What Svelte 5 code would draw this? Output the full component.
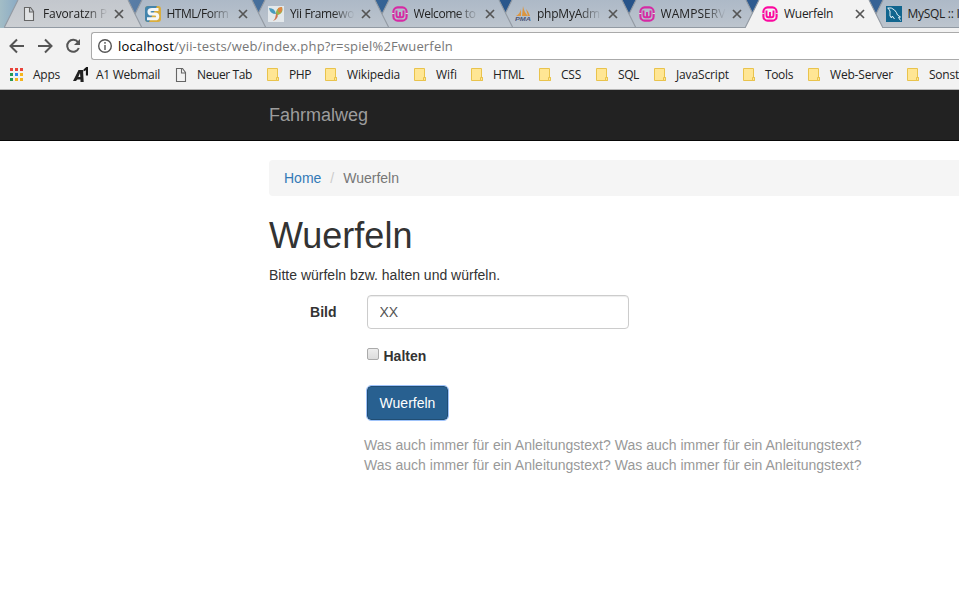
<script>
  const tabs = [
    { title: 'Favoratzn P', icon: 'page', fade: true },
    { title: 'HTML/Form', icon: 'selfhtml', fade: true },
    { title: 'Yii Framewo', icon: 'yii', fade: true },
    { title: 'Welcome to', icon: 'wamp', fade: true },
    { title: 'phpMyAdm', icon: 'pma', fade: true },
    { title: 'WAMPSERV', icon: 'wamp', fade: true },
    { title: 'Wuerfeln', icon: 'wamp', active: true },
    { title: 'MySQL :: I', icon: 'mysql' }
  ];
  const bookmarks = [
    { label: 'Apps', icon: 'apps', width: 64, gap: 24, text: 27 },
    { label: 'A1 Webmail', icon: 'a1', width: 103, gap: 23, text: 64 },
    { label: 'Neuer Tab', icon: 'page', width: 91, gap: 24, text: 55 },
    { label: 'PHP', icon: 'folder', width: 58, gap: 22, text: 22 },
    { label: 'Wikipedia', icon: 'folder', width: 89, gap: 22, text: 53 },
    { label: 'Wifi', icon: 'folder', width: 57, gap: 22, text: 21 },
    { label: 'HTML', icon: 'folder', width: 68, gap: 22, text: 31 },
    { label: 'CSS', icon: 'folder', width: 57, gap: 22, text: 20 },
    { label: 'SQL', icon: 'folder', width: 58, gap: 22, text: 21 },
    { label: 'JavaScript', icon: 'folder', width: 89, gap: 22, text: 53 },
    { label: 'Tools', icon: 'folder', width: 65, gap: 22, text: 28 },
    { label: 'Web-Server', icon: 'folder', width: 99, gap: 22, text: 63 },
    { label: 'Sonst', icon: 'folder', width: 60, gap: 22, text: 30 }
  ];

  let picture = $state('XX');
  let hold = $state(false);

  // Spread the glyphs of a label over a given width.
  function fit(node, width) {
    const range = document.createRange();
    range.selectNodeContents(node);
    const natural = range.getBoundingClientRect().width;
    node.style.letterSpacing = `${(width - natural) / node.textContent.length}px`;
  }
  const titleWidths = [64, 62, 64, 62, 63, 65, 49, 52];
</script>

{#snippet icon(name)}
  {#if name === 'page'}
    <svg width="16" height="16" viewBox="0 0 16 16"><path d="M3.5 1.5h6l3 4v9h-9zM8.5 1.5V6h4" fill="#f1f1f1" fill-opacity=".6" stroke="#666" stroke-width="1.1" /></svg>
  {:else if name === 'selfhtml'}
    <svg width="16" height="16" viewBox="0 0 16 16"><path d="M3 0h10q3 0 3 3v10q0 3-3 3H3q-3 0-3-3V3q0-3 3-3" fill="#d9ad3d" /><path d="M3 0h9L8 8l-4 8H3q-3 0-3-3V3q0-3 3-3" fill="#4384ac" /><path d="M13.5 3.5H7Q4 3.5 4 5.8T6.5 8H10q2.7 0 2.7 2.4T10 12.8H2" fill="none" stroke="#f5f7f8" stroke-width="3.1" /></svg>
  {:else if name === 'yii'}
    <svg width="16" height="16" viewBox="0 0 16 16"><rect width="16" height="16" fill="#e3e8eb" /><path d="M1 2q6 0 7 6Q2 8 1 2" fill="#4899bd" /><path d="M8 9q-1-7 6-8 2 6-4 8" fill="#95b64c" /><path d="M10 2q2-1 4-1 1 4-2 6-3-1-2-5" fill="#dd8642" /><path d="M8 7q3 2 1 5-1 2-4 3 3-3 3-8" fill="#ce7650" /></svg>
  {:else if name === 'wamp'}
    <svg width="16" height="16" viewBox="0 0 16 16"><rect x="1.4" y="1.4" width="13.2" height="13.2" rx="4.2" fill="none" stroke="currentColor" stroke-width="2.1" /><path d="M4.5 4.5v4.8q0 1.9 1.7 1.9h3.6q1.7 0 1.7-1.9V4.5M8 6v5" fill="none" stroke="currentColor" stroke-width="1.9" /><path d="M0 7.5h2.4M13.6 7.5H16" stroke="#ddd" stroke-width="1" /></svg>
  {:else if name === 'pma'}
    <svg width="16" height="16" viewBox="0 0 16 16"><path d="M6 3v7H1q4-2 5-7M8 0q1 6 5 10H7zM11 3q3 3 4 7h-2" fill="#dc953f" /><text x="0" y="15.4" textLength="16" lengthAdjust="spacingAndGlyphs" class="pma">PMA</text></svg>
  {:else if name === 'mysql'}
    <svg width="16" height="16" viewBox="0 0 16 16"><rect width="16" height="16" fill="#11658e" /><path d="M1.5 2q4-1 7 2 2 2 3 5l3 2-2 .5 2 3M2 2l2 3v5l1.5 2 .8-2 2.2 3" fill="none" stroke="#e5f2f7" stroke-width="1" /></svg>
  {:else if name === 'apps'}
    <svg width="16" height="16" viewBox="0 0 16 16">
      <path d="M1 1h3v3H1zM6 1h3v3H6zM11 1h3v3h-3z" fill="#e9433a" />
      <path d="M1 6h3v3H1zM1 11h3v3H1z" fill="#279955" /><path d="M6 6h3v3H6z" fill="#3289ef" /><path d="M6 11h3v3H6zM11 11h3v3h-3zM11 6h3v3h-3z" fill="#f4b51e" />
    </svg>
  {:else if name === 'a1'}
    <svg width="16" height="16" viewBox="0 0 16 16"><path d="M0 14 5.5 3H10l.7 12H7.5v-2.5H4.3L3 14zM5.3 10h2L7 6z" fill="#222" fill-rule="evenodd" /><path d="M10.5 2.5 13.3 0H15v8.5h-2.1V3.2l-2.4 1.2z" fill="#171717" /></svg>
  {:else}
    <svg width="16" height="16" viewBox="0 0 16 16"><path d="M.5 1.5h10v9h1v3h-11z" fill="#ffe694" stroke="#e9c34c" /><path d="M9.5 13.5v-3h2v3z" fill="#ffe694" stroke="#e9c34c" /></svg>
  {/if}
{/snippet}

<div class="screen">
  <div class="tabs">
    {#each tabs as tab, i}
      <div class="tab" class:active={tab.active} style:z-index={tab.active ? 20 : 10 - i}>
        <svg class="shape" width="138" height="28" viewBox="0 0 138 28">
          <defs>
            <linearGradient id="glass{i}" x1="0" y1="0" x2="0" y2="1">
              <stop offset="0" stop-color={i === 0 ? '#c3c7cd' : '#adb9c7'} />
              <stop offset="1" stop-color={i === 0 ? '#cccfd3' : '#bdc5ce'} />
            </linearGradient>
          </defs>
          <path d="M0 28 14 0H124L138 28z" fill={tab.active ? '#f2f2f2' : `url(#glass${i})`} />
          <path class="edge" d="M0 28 14 0M124 0 138 28" />
          {#if !tab.active}<path class="edge" d="M0 27.5h138" />{/if}
        </svg>
        <span class="favicon">{@render icon(tab.icon)}</span>
        <span class="title" class:fade={tab.fade}><span use:fit={titleWidths[i]}>{tab.title}</span></span>
        {#if i < 7}<svg class="close" width="10" height="10" viewBox="0 0 10 10"><path d="m1 1 8 8M9 1 1 9" /></svg>{/if}
      </div>
    {/each}
  </div>

  <div class="toolbar">
    <svg width="16" height="16" viewBox="0 0 16 16"><path d="M15 8H2M8 1.5 1.5 8 8 14.5" /></svg>
    <svg width="16" height="16" viewBox="0 0 16 16"><path d="M1 8h13M8 1.5 14.5 8 8 14.5" /></svg>
    <svg width="16" height="16" viewBox="0 0 16 16"><path d="M13 4.2A6 6 0 1 0 13.8 10" /><path d="M15 1v6H9z" class="solid" /></svg>
    <div class="address">
      <svg width="16" height="16" viewBox="0 0 16 16"><circle cx="8" cy="8" r="6.3" /><path d="M8 7v5M8 4v1.8" /></svg>
      <span class="url" use:fit={335}><b>localhost</b>/yii-tests/web/index.php?r=spiel%2Fwuerfeln</span>
    </div>
  </div>

  <div class="bookmarks">
    {#each bookmarks as mark}
      <div class="bookmark" style:width="{mark.width}px">
        <span class="mark-icon" class:page={mark.icon === 'page'} style:width="{mark.gap}px">{@render icon(mark.icon)}</span>
        <span class="mark-label" use:fit={mark.text}>{mark.label}</span>
      </div>
    {/each}
  </div>

  <nav><span>Fahrmalweg</span></nav>

  <main>
    <ol><li class="home">Home</li><li class="slash">/</li><li>Wuerfeln</li></ol>
    <h1>Wuerfeln</h1>
    <p>Bitte würfeln bzw. halten und würfeln.</p>
    <div class="row">
      <label class="name" for="picture">Bild</label>
      <input id="picture" class="field" bind:value={picture} />
    </div>
    <label class="hold"><input type="checkbox" bind:checked={hold} /><span>Halten</span></label>
    <button>Wuerfeln</button>
    <div class="help">
      <span use:fit={497.5}>Was auch immer für ein Anleitungstext? Was auch immer für ein Anleitungstext?</span><br />
      <span use:fit={497.5}>Was auch immer für ein Anleitungstext? Was auch immer für ein Anleitungstext?</span>
    </div>
  </main>
</div>

<style>
  :global(body) { margin: 0; overflow: hidden; background: #fff; }
  .screen { width: 959px; height: 591px; overflow: hidden; font: 14px/20px "Liberation Sans", Arial, sans-serif; color: #333; }
  .screen * { box-sizing: border-box; }
  svg { display: block; flex: none; }
  .tabs, .toolbar, .bookmarks { font-family: "Open Sans", "Noto Sans", sans-serif; color: #222; white-space: nowrap; }
  .tabs { display: flex; height: 28px; padding-left: 4px; overflow: hidden; background: linear-gradient(90deg, #a3bdc6 0, #88a9c5 2%, #587ca5 14%, #53779f 18%, #396798 35%, #235087 60%, #3c6799 100%); }
  .tab { position: relative; flex: none; display: flex; width: 138px; height: 28px; margin-right: -14.5px; padding: 6px 0 0 17px; }
  .shape { position: absolute; left: 0; top: 0; z-index: -1; }
  .edge { fill: none; stroke: #929aa3; stroke-width: 1.1; }
  .favicon { width: 22px; color: #d62aa4; }
  .active .favicon { color: #fb0aa0; }
  .title { width: 65px; overflow: hidden; font-size: 12px; line-height: 16px; }
  .title.fade { mask-image: linear-gradient(90deg, #000 65%, transparent 100%); }
  .close { margin: 3px 0 0 6px; }
  .close path { stroke: #555; stroke-width: 1.7; }
  .toolbar { display: flex; align-items: center; gap: 12px; height: 36px; padding: 0 0 0 9px; background: #f2f2f2; }
  .toolbar svg { fill: none; stroke: #555; stroke-width: 2; }
  .toolbar .solid { fill: #555; stroke: none; }
  .address { display: flex; align-items: center; flex: 1; height: 28px; margin-left: -2px; padding-left: 5px; border: 1px solid #aaa; border-right: 0; border-radius: 3px 0 0 3px; background: #fff; }
  .address svg { stroke-width: 1.4; }
  .url { margin-left: 5px; color: #777; font-size: 13px; line-height: 20px; }
  .url b { color: #000; font-weight: 400; }
  .bookmarks { display: flex; height: 26px; padding: 3px 0 0 9px; border-bottom: 1px solid #b6b6b6; background: #f2f2f2; font-size: 12px; line-height: 17px; overflow: hidden; }
  .bookmark { display: flex; flex: none; }
  .mark-icon { flex: none; }
  .mark-icon.page { margin-left: -3px; }
  .mark-label { margin-top: -1px; }
  nav { height: 51px; padding: 15px 0 0 269px; border-bottom: 1px solid #080808; background: #222; color: #9d9d9d; font-size: 18px; }
  main { padding: 19px 0 0 269px; }
  ol { display: flex; height: 36px; margin: 0 0 20px; padding: 8px 15px; list-style: none; background: #f5f5f5; border-radius: 4px 0 0 4px; color: #777; }
  .home { color: #337ab7; }
  .slash { padding: 0 9px; color: #ccc; }
  h1 { margin: 0 0 10px; font-size: 36px; font-weight: 400; line-height: 39px; }
  p { margin: 0 0 10px; }
  .row { display: flex; margin-bottom: 17px; }
  .name { width: 98px; padding: 7px 30.5px 0 0; text-align: right; font-weight: 700; }
  .field { width: 262px; height: 34px; padding: 6px 12px 6px 11.5px; border: 1px solid #ccc; border-radius: 4px; box-shadow: inset 0 1px 1px #00000013; background: #fff; color: #555; font: inherit; }
  .hold { display: flex; height: 20px; width: 100px; margin: 0 0 20px 98px; font-weight: 700; }
  .hold input { appearance: none; width: 12px; height: 12px; margin: 2px 4.5px 0 0; border: 1px solid #aaa; border-radius: 2px; background: linear-gradient(#ededed, #dcdcdc); }
  button { display: block; width: 81px; height: 34px; margin-left: 98px; padding: 0; border: 1px solid #204d74; border-radius: 4px; outline: 1px solid #9fc3fa; background: #286090; color: #fff; font: inherit; }
  .help { margin: 15px 0 0 95px; color: #999; white-space: nowrap; }
  .pma { font: italic 700 5px "Liberation Sans", sans-serif; fill: #4d5779; }
</style>
